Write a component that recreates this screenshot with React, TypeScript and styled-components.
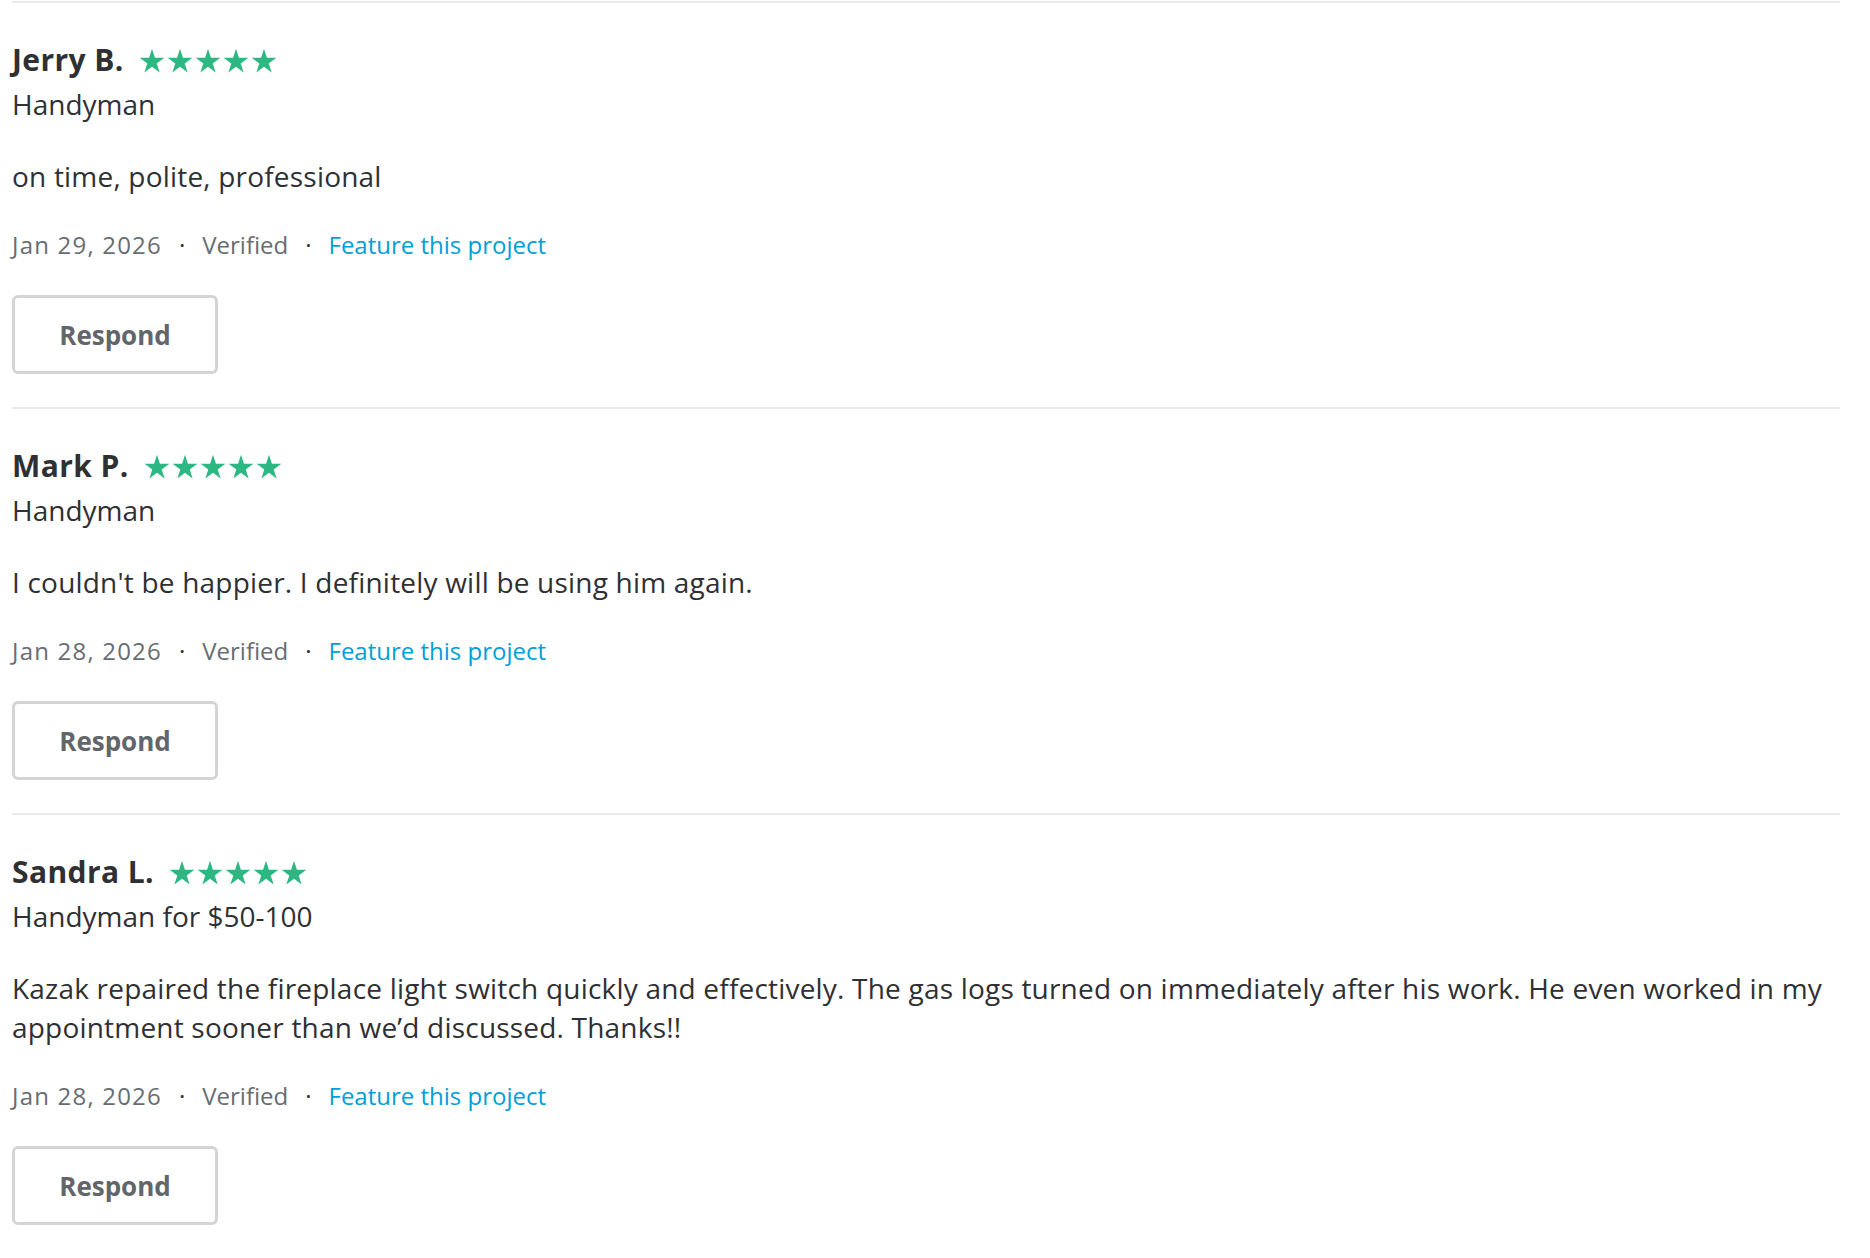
import React from "react";
import styled, { createGlobalStyle } from "styled-components";

const GlobalStyle = createGlobalStyle`
  html, body {
    margin: 0;
    padding: 0;
    background: #ffffff;
  }
  body {
    font-family: "Open Sans", "Liberation Sans", Arial, sans-serif;
    color: #2f3033;
    -webkit-font-smoothing: antialiased;
  }
`;

const Page = styled.main`
  width: 1828px;
  margin-left: 12px;
  padding-top: 1px;
`;

const ReviewItem = styled.article`
  border-top: 2px solid #e9eceb;
  padding: 39px 0 33px;
  display: flex;
  flex-direction: column;
  align-items: flex-start;
`;

const Header = styled.div`
  display: flex;
  align-items: center;
  gap: 15px;
  height: 36px;
`;

const Name = styled.h3`
  margin: 0;
  font-size: 30px;
  line-height: 36px;
  font-weight: 700;
  letter-spacing: 0.4px;
  color: #2f3033;
`;

const Stars = styled.div`
  display: flex;
  align-items: center;
  gap: 2px;
  margin-top: 1px;
`;

const StarSvg = styled.svg`
  width: 26px;
  height: 26px;
  display: block;
  fill: #2db783;
`;

const Subtitle = styled.div`
  margin-top: 7px;
  font-size: 28px;
  line-height: 38px;
  color: #2f3033;
`;

const Body = styled.p`
  margin: 34px 0 0;
  font-size: 28px;
  line-height: 39px;
  letter-spacing: 0.2px;
  color: #2f3033;
  max-width: 1828px;
`;

const Meta = styled.div`
  margin-top: 33px;
  display: flex;
  align-items: center;
  gap: 17px;
  font-size: 24px;
  line-height: 32px;
  color: #676d73;
`;

const DateText = styled.span`
  letter-spacing: 1.2px;
`;

const Dot = styled.span`
  color: #2f3033;
`;

const FeatureLink = styled.a`
  color: #009fd9;
  text-decoration: none;
  cursor: pointer;
`;

const RespondButton = styled.button`
  margin-top: 34px;
  width: 206px;
  height: 79px;
  box-sizing: border-box;
  border: 3px solid #d3d4d6;
  border-radius: 6px;
  background: #ffffff;
  font-family: "Open Sans", "Liberation Sans", Arial, sans-serif;
  font-size: 26px;
  font-weight: 700;
  color: #62666b;
  cursor: pointer;
  padding: 0;
`;

const Star = () => (
  <StarSvg viewBox="0 0 24 24" aria-hidden="true">
    <path d="M12 0.8 L14.69 9.09 L23.41 9.09 L16.36 14.22 L19.05 22.51 L12 17.38 L4.95 22.51 L7.64 14.22 L0.59 9.09 L9.31 9.09 Z" />
  </StarSvg>
);

type Review = {
  name: string;
  service: string;
  text: string;
  date: string;
};

const reviews: Review[] = [
  {
    name: "Jerry B.",
    service: "Handyman",
    text: "on time, polite, professional",
    date: "Jan 29, 2026",
  },
  {
    name: "Mark P.",
    service: "Handyman",
    text: "I couldn't be happier. I definitely will be using him again.",
    date: "Jan 28, 2026",
  },
  {
    name: "Sandra L.",
    service: "Handyman for $50-100",
    text:
      "Kazak repaired the fireplace light switch quickly and effectively. The gas logs turned on immediately after his work. He even worked in my appointment sooner than we\u2019d discussed. Thanks!!",
    date: "Jan 28, 2026",
  },
];

export default function App() {
  return (
    <>
      <GlobalStyle />
      <Page>
        {reviews.map((r) => (
          <ReviewItem key={r.name}>
            <Header>
              <Name>{r.name}</Name>
              <Stars>
                {[0, 1, 2, 3, 4].map((i) => (
                  <Star key={i} />
                ))}
              </Stars>
            </Header>
            <Subtitle>{r.service}</Subtitle>
            <Body>{r.text}</Body>
            <Meta>
              <DateText>{r.date}</DateText>
              <Dot>·</Dot>
              <span>Verified</span>
              <Dot>·</Dot>
              <FeatureLink>Feature this project</FeatureLink>
            </Meta>
            <RespondButton>Respond</RespondButton>
          </ReviewItem>
        ))}
      </Page>
    </>
  );
}
